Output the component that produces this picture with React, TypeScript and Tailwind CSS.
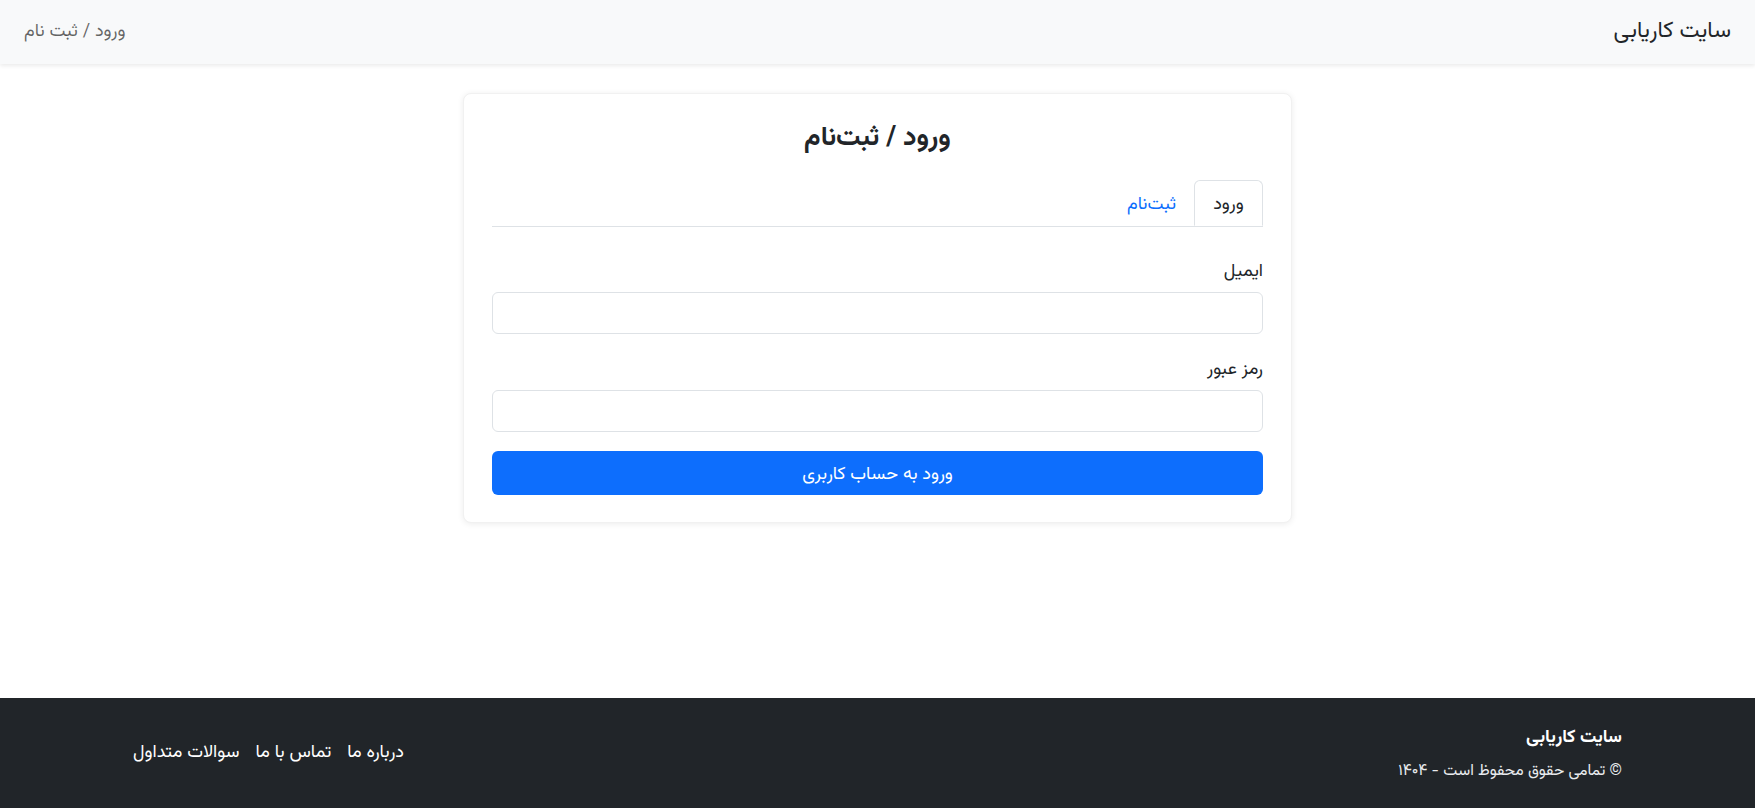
export default function App() {
  return (
    <div
      dir="rtl"
      className="min-h-screen flex flex-col bg-white text-[#212529] text-[18px]"
      style={{ fontFamily: '"Vazirmatn", "Noto Sans Arabic", "Noto Sans", "DejaVu Sans", sans-serif' }}
    >
      {/* Navbar */}
      <nav className="h-16 bg-[#f8f9fa] shadow-[0_2px_4px_rgba(0,0,0,0.08)] flex items-center justify-between px-6 relative z-10">
        <span className="text-[22.5px] text-[#212529]">سایت کاریابی</span>
        <a className="text-[18px] pt-px text-[rgba(0,0,0,0.6)]">ورود / ثبت نام</a>
      </nav>

      {/* Main */}
      <main className="flex-1 flex justify-center pt-[29px]">
        <div className="w-[829px] h-fit rounded-lg bg-white shadow-[0_1px_6px_rgba(0,0,0,0.08)] border border-[#f1f1f1] px-[28px] pt-[26px] pb-[27px]">
          <h3 className="text-[27px] font-bold text-center leading-[36px] pt-px text-[#212529]">ورود / ثبت‌نام</h3>

          {/* Tabs */}
          <div className="mt-[23px] flex border-b border-[#dee2e6]">
            <button className="h-[46px] w-[69px] pt-[4px] -mb-px border border-[#dee2e6] border-b-white rounded-t-md bg-white text-[18px] text-[#212529]">
              ورود
            </button>
            <button className="h-[46px] pt-[4px] px-[18px] text-[18px] text-[#0d6efd]">ثبت‌نام</button>
          </div>

          {/* Form */}
          <div className="mt-[33px]">
            <label className="block text-[18px] leading-6 mb-[8px]">ایمیل</label>
            <input
              type="email"
              className="block w-full h-[42px] rounded-md border border-[#dee2e6] bg-white px-3 outline-none"
            />
          </div>
          <div className="mt-[24px]">
            <label className="block text-[18px] leading-6 mb-[8px]">رمز عبور</label>
            <input
              type="password"
              className="block w-full h-[42px] rounded-md border border-[#dee2e6] bg-white px-3 outline-none"
            />
          </div>
          <button className="mt-[19px] w-full h-[44px] pt-[4px] rounded-md bg-[#0d6efd] text-white text-[18px]">
            ورود به حساب کاربری
          </button>
        </div>
      </main>

      {/* Footer */}
      <footer className="h-[110px] bg-[#212529] text-white flex items-center justify-between px-[133px]">
        <div className="flex flex-col gap-[7px]">
          <span className="text-[18px] font-bold leading-[27px] pt-px">سایت کاریابی</span>
          <span className="text-[15.75px] leading-6 text-[#e9ecef]">© تمامی حقوق محفوظ است - ۱۴۰۴</span>
        </div>
        <div className="flex gap-[16px] text-[18px]">
          <a>درباره ما</a>
          <a>تماس با ما</a>
          <a>سوالات متداول</a>
        </div>
      </footer>
    </div>
  );
}
